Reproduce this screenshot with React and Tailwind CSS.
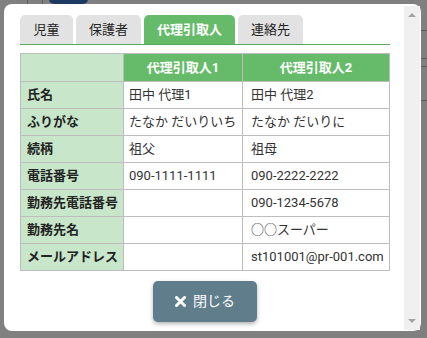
import { useState } from 'react';

const rows = [
  { label: '氏名', a: '田中 代理1', b: '田中 代理2' },
  { label: 'ふりがな', a: 'たなか だいりいち', b: 'たなか だいりに' },
  { label: '続柄', a: '祖父', b: '祖母' },
  { label: '電話番号', a: '090-1111-1111', b: '090-2222-2222' },
  { label: '勤務先電話番号', a: '', b: '090-1234-5678' },
  { label: '勤務先名', a: '', b: '○○スーパー' },
  { label: 'メールアドレス', a: '', b: 'st101001@pr-001.com' },
];

const tabs = [
  { key: 'child', label: '児童', w: 'w-[53px]' },
  { key: 'guardian', label: '保護者', w: 'w-[65px]' },
  { key: 'proxy', label: '代理引取人', w: 'w-[91px]' },
  { key: 'contact', label: '連絡先', w: 'w-[65px]' },
];

export default function App() {
  const [active, setActive] = useState('proxy');

  return (
    <div className="flex h-[338px] w-[427px] flex-col overflow-hidden bg-[#808080] font-['Roboto','Noto_Sans_CJK_JP',sans-serif]">
      {/* page behind the overlay, top strip */}
      <div className="flex h-[4px] items-end overflow-hidden">
        <div className="ml-[27px] h-[4px] w-px bg-[#5c5c5c]" />
        <div className="ml-[14px] h-[4px] w-px bg-[#5c5c5c]" />
        <div className="ml-[6px] h-[10px] w-[39px] shrink-0 rounded-[5px] bg-[#1d3a63]" />
      </div>

      <div className="flex">
        <div className="w-[4px]" />
        <div className="flex h-[327px] w-[417px] rounded-[8px] bg-white">
          <div className="flex-1 pl-[16px] pr-[14px] pt-[11px]">
            <div className="flex h-[30px] items-end gap-[3px] border-b border-[#5aab5e]">
              {tabs.map((tab) => (
                <button
                  key={tab.key}
                  onClick={() => setActive(tab.key)}
                  className={`${tab.w} flex h-[29px] items-center justify-center rounded-t-[5px] text-[13px] ${
                    active === tab.key ? 'bg-[#66bb6a] font-bold text-white' : 'bg-[#e2e2e2] text-[#222]'
                  }`}
                >
                  {tab.label}
                </button>
              ))}
            </div>

            <table className="mt-[8px] w-[369px] table-fixed border-collapse text-[13px]">
              <colgroup>
                <col className="w-[103px]" />
                <col className="w-[119px]" />
                <col className="w-[147px]" />
              </colgroup>
              <thead>
                <tr className="h-[28px]">
                  <th className="border border-[#bdbdbd] bg-[#c8e6c9]" />
                  <th className="border border-[#bdbdbd] bg-[#66bb6a] text-center font-bold text-white">代理引取人1</th>
                  <th className="border border-[#bdbdbd] bg-[#66bb6a] text-center font-bold text-white">代理引取人2</th>
                </tr>
              </thead>
              <tbody>
                {rows.map((row) => (
                  <tr key={row.label} className="h-[27px]">
                    <td className="whitespace-nowrap border border-[#bdbdbd] bg-[#c8e6c9] px-[6px] font-bold text-[#222]">{row.label}</td>
                    <td className="whitespace-nowrap border border-[#bdbdbd] px-[5px] text-[#333]">{row.a}</td>
                    <td className="whitespace-nowrap border border-[#bdbdbd] px-[8px] text-[#333]">{row.b}</td>
                  </tr>
                ))}
              </tbody>
            </table>

            <div className="mt-[10px] flex justify-center">
              <button className="flex h-[41px] w-[104px] items-center justify-center gap-[7px] rounded-[5px] bg-[#607d8b] text-[14px] text-white shadow-[0_2px_4px_rgba(0,0,0,0.3)]">
                <svg width="11" height="11" viewBox="0 0 11 11">
                  <path d="M1.5 1.5 L9.5 9.5 M9.5 1.5 L1.5 9.5" stroke="white" strokeWidth="3" strokeLinecap="round" />
                </svg>
                閉じる
              </button>
            </div>
          </div>

          <div className="mb-[1px] mr-[1px] mt-[2px] flex w-[17px] flex-col items-center justify-between bg-[#f0f0f0] py-[7px]">
            <div className="h-0 w-0 border-x-[4px] border-b-[4px] border-x-transparent border-b-[#a3a3a3]" />
            <div className="h-0 w-0 border-x-[4px] border-t-[4px] border-x-transparent border-t-[#a3a3a3]" />
          </div>
        </div>

        {/* page behind the overlay, right strip */}
        <div className="flex w-[6px] flex-col">
          <div className="mt-[26px] h-px bg-[#5c5c5c]" />
          <div className="mt-[27px] h-px bg-[#5c5c5c]" />
          <div className="mt-[7px] h-px bg-[#5c5c5c]" />
          <div className="mt-[33px] h-px bg-[#5c5c5c]" />
        </div>
      </div>
    </div>
  );
}
